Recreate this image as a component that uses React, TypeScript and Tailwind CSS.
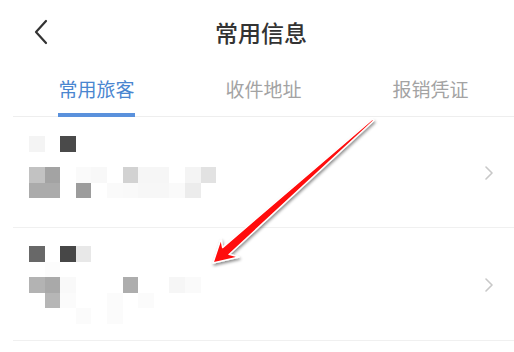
import React from "react";

const M1: string[][] = [
  ["#f4f4f4", "", "#4a4a4a", "", "", "", "", "", "", "", "", "", ""],
  ["", "", "", "", "", "", "", "", "", "", "", "", ""],
  ["#c2c2c2", "#a3a3a3", "", "#fafafa", "#f8f8f8", "", "#d2d2d2", "#f6f6f6", "#f6f6f6", "", "#f4f4f4", "#e2e2e2", ""],
  ["#ababab", "#ababab", "", "#9c9c9c", "", "#fafafa", "#f9f9f9", "#f7f7f7", "#f7f7f7", "#fafafa", "#ececec", "", ""],
];

const M2: string[][] = [
  ["#686868", "", "#474747", "#e8e8e8", "", "", "", "", "", "", "", "", ""],
  ["", "#fcfcfc", "", "", "", "", "", "", "", "", "", "", ""],
  ["#b3b3b3", "#a9a9a9", "#f9f9f9", "", "", "", "#adadad", "", "", "#f6f6f6", "#fafafa", "", ""],
  ["", "#b6b6b6", "#fbfbfb", "", "", "#fbfbfb", "", "#fbfbfb", "", "", "", "", ""],
  ["", "", "", "#fbfbfb", "", "#fbfbfb", "", "", "", "", "", "", ""],
];

function Mosaic({ data }: { data: string[][] }) {
  return (
    <div className="grid grid-cols-[repeat(13,15.6px)] auto-rows-[15.6px]">
      {data.flat().map((c, i) => (
        <div key={i} style={{ backgroundColor: c || "transparent" }} />
      ))}
    </div>
  );
}

function Chevron() {
  return (
    <svg width="10" height="14" viewBox="0 0 10 14" className="shrink-0">
      <path d="M2 1 L8 7 L2 13" fill="none" stroke="#c8c8c8" strokeWidth="1.6" strokeLinecap="round" strokeLinejoin="round" />
    </svg>
  );
}

export default function App() {
  return (
    <div
      className="relative w-[514px] h-[352px] bg-white overflow-hidden"
      style={{ fontFamily: '"Noto Sans CJK SC", "Noto Sans", sans-serif' }}
    >
      {/* Header */}
      <div className="relative h-[64px] flex items-center justify-center">
        <svg width="16" height="26" viewBox="0 0 16 26" className="absolute left-[33px] top-[19px]">
          <path d="M13 2 L3 13 L13 24" fill="none" stroke="#333" strokeWidth="2.2" strokeLinecap="round" strokeLinejoin="round" />
        </svg>
        <span className="pl-[8px] text-[23px] leading-none text-[#333] font-medium">常用信息</span>
      </div>

      {/* Tabs */}
      <div className="ml-[13px] grid grid-cols-3 h-[53px] border-b border-[#eeeeee]">
        <div className="relative flex items-center justify-center pb-[4px]">
          <span className="text-[19px] leading-none text-[#4a86d0]">常用旅客</span>
          <div className="absolute bottom-[-1px] left-[45px] w-[77px] h-[4px] bg-[#5a91dc]" />
        </div>
        <div className="flex items-center justify-center pb-[4px]">
          <span className="text-[19px] leading-none text-[#a3a3a3]">收件地址</span>
        </div>
        <div className="flex items-center justify-center pb-[4px]">
          <span className="text-[19px] leading-none text-[#a3a3a3]">报销凭证</span>
        </div>
      </div>

      {/* Items */}
      <div className="ml-[13px]">
        <div className="h-[111px] border-b border-[#f0f0f0] flex items-start justify-between pr-[20px]">
          <div className="pt-[19px] pl-[16px]">
            <Mosaic data={M1} />
          </div>
          <div className="self-center pt-[2px]">
            <Chevron />
          </div>
        </div>
        <div className="h-[113px] border-b border-[#f0f0f0] flex items-start justify-between pr-[20px]">
          <div className="pt-[18px] pl-[16px]">
            <Mosaic data={M2} />
          </div>
          <div className="self-center pt-[2px]">
            <Chevron />
          </div>
        </div>
      </div>

      {/* Red arrow annotation */}
      <svg className="absolute left-0 top-0 pointer-events-none" width="514" height="352" viewBox="0 0 514 352">
        <defs>
          <filter id="sh" x="-20%" y="-20%" width="140%" height="140%">
            <feDropShadow dx="1" dy="2" stdDeviation="1.5" floodColor="#000" floodOpacity="0.45" />
          </filter>
        </defs>
        <polygon
          points="213,263 221,239 222.6,247.6 372.4,119.2 373.8,120.6 229,254.4 239,257"
          fill="#ff0a0a"
          stroke="#ffffff"
          strokeWidth="1.4"
          strokeLinejoin="round"
          filter="url(#sh)"
        />
      </svg>
    </div>
  );
}
